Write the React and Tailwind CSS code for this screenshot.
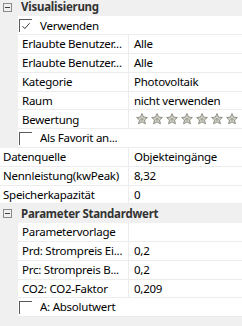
import React from "react";

const font = { fontFamily: '"Noto Sans", "Open Sans", sans-serif' };

const Star = () => (
  <svg width="12" height="12" viewBox="0 0 24 24">
    <path
      d="M12 1.2l3.2 7.1 7.6.7-5.8 5 1.8 7.6L12 17.7l-6.8 3.9 1.8-7.6-5.8-5 7.6-.7z"
      fill="#d4d4cc"
      stroke="#8e8e84"
      strokeWidth="2"
      strokeLinejoin="round"
    />
    <circle cx="12" cy="12.5" r="3.2" fill="#a8a89c" />
  </svg>
);

const MinusBox = () => (
  <div className="w-[9px] h-[9px] border border-[#8a8a8a] flex items-center justify-center shrink-0">
    <div className="w-[5px] h-px bg-[#404040]" />
  </div>
);

const Check = ({ checked }) => (
  <div className="w-[13px] h-[13px] border-l border-t border-[#5a5a5a] shrink-0 flex items-center justify-center">
    {checked && (
      <svg width="10" height="10" viewBox="0 0 10 10">
        <path d="M1.5 5.2l2.3 2.4 4.8-5.4" fill="none" stroke="#3a3a3a" strokeWidth="1" />
      </svg>
    )}
  </div>
);

const Header = ({ title, first }) => (
  <div
    className={`flex items-center bg-[#f0f0f0] pl-[3px] gap-[9px] ${
      first ? "h-[16.4px] pb-[2.4px]" : "h-[18.8px]"
    }`}
  >
    <MinusBox />
    <span className="font-bold text-[#333] whitespace-nowrap">{title}</span>
  </div>
);

const Row = ({ label, value, indent = true }) => (
  <div className="flex h-[18.8px]">
    {indent && <div className="w-[18px] shrink-0 bg-[#f0f0f0]" />}
    <div
      className={`flex items-center shrink-0 border-b border-r border-[#ececec] whitespace-nowrap overflow-hidden ${
        indent ? "w-[111px] pl-[4px]" : "w-[129px] pl-[3px]"
      }`}
    >
      {label}
    </div>
    <div className="flex flex-1 items-center border-b border-[#ececec] pl-[5px] whitespace-nowrap overflow-hidden">
      {value}
    </div>
  </div>
);

const CheckRow = ({ label, checked }) => (
  <div className="flex h-[18.8px]">
    <div className="w-[18px] shrink-0 bg-[#f0f0f0]" />
    <div className="flex flex-1 items-center gap-[8px] pl-[1px] border-b border-[#ececec]">
      <Check checked={checked} />
      <span className="whitespace-nowrap">{label}</span>
    </div>
  </div>
);

export default function App() {
  return (
    <div
      className="w-[242px] h-[326px] bg-[#f0f0f0] overflow-hidden text-[11.5px] tracking-[-0.25px] text-black leading-none"
      style={font}
    >
      <div className="bg-white">
        <Header title="Visualisierung" first />
        <CheckRow label="Verwenden" checked />
        <Row label="Erlaubte Benutzer..." value="Alle" />
        <Row label="Erlaubte Benutzer..." value="Alle" />
        <Row label="Kategorie" value="Photovoltaik" />
        <Row label="Raum" value="nicht verwenden" />
        <Row
          label="Bewertung"
          value={
            <div className="flex gap-[3px] pl-[2px]">
              {[0, 1, 2, 3, 4, 5, 6].map((i) => (
                <Star key={i} />
              ))}
            </div>
          }
        />
        <CheckRow label="Als Favorit an..." />
        <Row label="Datenquelle" value="Objekteingänge" indent={false} />
        <Row label="Nennleistung(kwPeak)" value="8,32" indent={false} />
        <Row label="Speicherkapazität" value="0" indent={false} />
        <Header title="Parameter Standardwert" />
        <Row label="Parametervorlage" value="" />
        <Row label="Prd: Strompreis Ei..." value="0,2" />
        <Row label="Prc: Strompreis B..." value="0,2" />
        <Row label="CO2: CO2-Faktor" value="0,209" />
        <CheckRow label="A: Absolutwert" />
      </div>
    </div>
  );
}
